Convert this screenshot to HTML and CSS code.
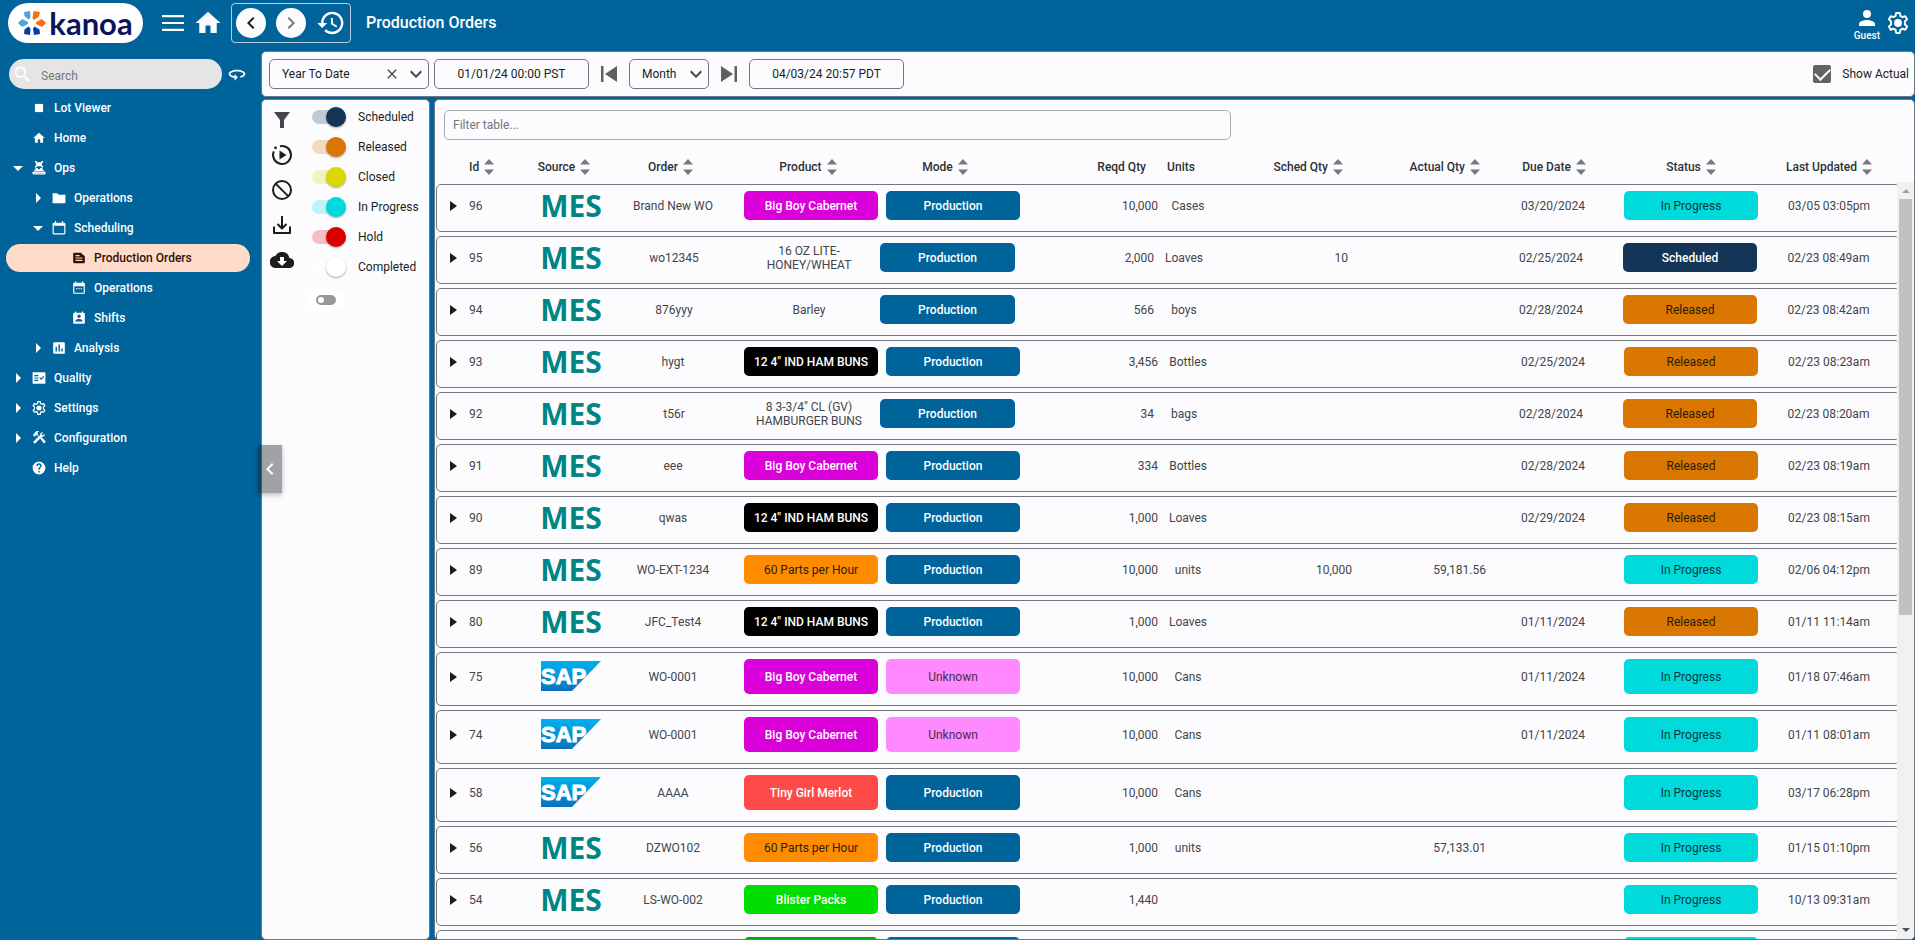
FILE: index.html
```html
<!DOCTYPE html>
<html lang="en">
<head>
<meta charset="utf-8">
<title>Production Orders</title>
<link rel="stylesheet" href="styles.css">
</head>
<body>
<svg class="defs" aria-hidden="true">
  <defs>
    <linearGradient id="sapfill" x1="0" y1="0" x2="0" y2="1"><stop offset="0" stop-color="#00b1ee"/><stop offset="1" stop-color="#0a72c0"/></linearGradient>
  </defs>
  <symbol id="i-home" viewBox="0 0 24 24"><path d="M10 20v-6h4v6h5v-8h3L12 3 2 12h3v8z"/></symbol>
  <symbol id="i-gear" viewBox="2 2 20 20"><path fill="none" stroke="currentColor" stroke-width="1.800" stroke-linejoin="round" d="M10.300 3h3.400l.5 2.600 1.900 1.100 2.500-.9 1.700 2.900-2 1.800v2.900l2 1.800-1.700 2.900-2.500-.9-1.900 1.100-.5 2.700h-3.400l-.5-2.700-1.900-1.100-2.500.9-1.700-2.900 2-1.800v-2.900l-2-1.800 1.700-2.900 2.500.9 1.900-1.100z"/><circle cx="12" cy="12" r="3.600"/></symbol>
  <symbol id="i-down" viewBox="0 0 24 24"><path d="M7.400 8.600 12 13.200l4.600-4.600L18 10l-6 6-6-6z"/></symbol>
  <symbol id="i-sort" viewBox="0 0 10 16"><path d="M0 5.500 5 0l5 5.500zM0 10.500h10L5 16z"/></symbol>
  <symbol id="i-caret" viewBox="0 0 7 10"><path d="M0 0 7 5 0 10z"/></symbol>
</svg>

<header class="topbar">
  <a class="logo" href="#" aria-label="kanoa">
    <svg viewBox="0 0 28 26" aria-hidden="true"><path fill="#4ba3e3" d="M6 2l6-1 .5 6.500-2 2L6.500 6z"/><path fill="#4ba3e3" d="M0 13l4-4 6 3v2l-6 3z"/><path fill="#ff6c0e" d="M15.500 1 22 2l-1 4.500-5 3.500-1.500-2z"/><path fill="#ff6c0e" d="M18 12l6-3 4 4-4 4-6-3z"/><path fill="#0b3aa5" d="M10.500 16.500l2 2L12 25l-6-1 .5-4.500z"/><path fill="#0b3aa5" d="M16.500 16.500l5 3L22 24l-6 1-1-6.500z"/></svg>
    <span>kanoa</span>
  </a>
  <button class="icon-btn" aria-label="Menu"><svg class="i-24" viewBox="0 0 24 24"><path d="M1 4h22v2.200H1zM1 10.900h22v2.200H1zM1 17.800h22V20H1z"/></svg></button>
  <button class="icon-btn home" aria-label="Home"><svg class="i-30" viewBox="0 0 24 24"><path d="M10 20v-6h4v6h5v-8h3L12 3 2 12h3v8z"/></svg></button>
  <div class="history">
    <button class="round" aria-label="Back"><svg class="i-24" viewBox="0 0 24 24"><path d="M15.400 7.400 14 6l-6 6 6 6 1.400-1.400L10.800 12z"/></svg></button>
    <button class="round muted" aria-label="Forward"><svg class="i-24" viewBox="0 0 24 24"><path d="M10 6 8.600 7.400l4.600 4.600-4.600 4.600L10 18l6-6z"/></svg></button>
    <button class="icon-btn" aria-label="History"><svg class="i-30" viewBox="0 0 24 24"><path d="M13 3a9 9 0 0 0-9 9H1l3.900 3.900.1.100L9 12H6a7 7 0 1 1 2.100 4.900l-1.500 1.500A9 9 0 1 0 13 3zm-1 5v5l4.300 2.500.7-1.200-3.500-2.100V8z"/></svg></button>
  </div>
  <h1>Production Orders</h1>
  <div class="user">
    <button class="guest"><svg class="i-24" viewBox="0 0 24 24"><path d="M12 12a4 4 0 1 0 0-8 4 4 0 0 0 0 8zm0 2c-2.700 0-8 1.300-8 4v2h16v-2c0-2.700-5.300-4-8-4z"/></svg><span>Guest</span></button>
    <button class="icon-btn" aria-label="Settings"><svg class="i-22"><use href="#i-gear"/></svg></button>
  </div>
</header>

<div class="shell">
  <nav class="sidebar" aria-label="Main">
    <div class="search-row">
      <div class="search">
        <svg viewBox="0 0 24 24" aria-hidden="true"><path d="M15.500 14h-.8l-.3-.3a6.500 6.500 0 1 0-.7.7l.3.3v.8l5 5 1.500-1.500zm-6 0a4.500 4.500 0 1 1 0-9 4.500 4.500 0 0 1 0 9z"/></svg>
        <input type="text" placeholder="Search" aria-label="Search">
      </div>
      <button class="icon-btn" aria-label="Reload"><svg class="i-20" viewBox="0 0 24 24"><path d="M12 7C6.500 7 2 9.200 2 12c0 2.200 2.900 4.100 7 4.800V20l4-4-4-4v2.700c-3.200-.6-5-1.900-5-2.700 0-1.100 3-3 8-3s8 1.900 8 3c0 .7-1.500 1.900-4 2.500v2.100c3.500-.8 6-2.500 6-4.600 0-2.800-4.500-5-10-5z"/></svg></button>
    </div>
    <ul class="tree">
      <li><a href="#"><i></i><svg viewBox="0 0 24 24"><path d="M5 5h14v14H5z"/></svg>Lot Viewer</a></li>
      <li><a href="#"><i></i><svg><use href="#i-home"/></svg>Home</a></li>
      <li><a href="#"><i class="open"></i><svg viewBox="0 0 24 24"><path d="M5 0h3v2h8V0h3v3h-2v5h2v3h-3V9H8v2H5V8h2V3H5zM6 12h4v2h4v-2h4v3h2v2H4v-2h2zM3 18h18a2.500 2.500 0 0 1 0 5H3a2.500 2.500 0 0 1 0-5zm1 2v1.500h2V20zm5 0v1.500h2V20zm4 0v1.500h2V20zm5 0v1.500h2V20z"/></svg>Ops</a>
        <ul>
          <li><a href="#"><i class="shut"></i><svg viewBox="0 0 24 24"><path d="M9 4H1v17h22V6.500H11.500z"/></svg>Operations</a></li>
          <li><a href="#"><i class="open"></i><svg viewBox="0 0 24 24"><path d="M21 3h-2V0h-2v3H7V0H5v3H3a2 2 0 0 0-2 2v16c0 1.100.9 2 2 2h18a2 2 0 0 0 2-2V5a2 2 0 0 0-2-2zm0 18H3V8h18z"/></svg>Scheduling</a>
            <ul>
              <li><a class="current" href="#" aria-current="page"><i></i><svg viewBox="0 0 24 24"><path d="M15 3H4a2 2 0 0 0-2 2v14c0 1.100.9 2 2 2h16a2 2 0 0 0 2-2V9zM6 7h7v2H6zm12 10H6v-2h12zm0-4H6v-2h12z"/></svg>Production Orders</a></li>
              <li><a href="#"><i></i><svg viewBox="0 0 24 24"><path d="M7 12h2v2H7zm4 0h2v2h-2zm4 0h2v2h-2zM20 3h-1V1h-2v2H7V1H5v2H4a2 2 0 0 0-2 2v15c0 1.100.9 2 2 2h16a2 2 0 0 0 2-2V5a2 2 0 0 0-2-2zm0 17H4V9h16z"/></svg>Operations</a></li>
              <li><a href="#"><i></i><svg viewBox="0 0 24 24"><path fill-rule="evenodd" d="M20 3h-1V1h-2v2H7V1H5v2H4a2 2 0 0 0-2 2v15c0 1.100.9 2 2 2h16a2 2 0 0 0 2-2V5a2 2 0 0 0-2-2zm-8 3a3 3 0 1 1 0 6 3 3 0 0 1 0-6zm6 12H6v-1c0-2 4-3.100 6-3.100s6 1.100 6 3.100z"/></svg>Shifts</a></li>
            </ul>
          </li>
          <li><a href="#"><i class="shut"></i><svg viewBox="0 0 24 24"><path fill-rule="evenodd" d="M4 2h16a2 2 0 0 1 2 2v16a2 2 0 0 1-2 2H4a2 2 0 0 1-2-2V4c0-1.100.9-2 2-2zm2 8v8h2.500v-8zm5-4v12h2.500V6zm5 7v5h2.500v-5z"/></svg>Analysis</a></li>
        </ul>
      </li>
      <li><a href="#"><i class="shut"></i><svg viewBox="0 0 24 24"><path fill-rule="evenodd" d="M2 2h20a1 1 0 0 1 1 1v18a1 1 0 0 1-1 1H2a1 1 0 0 1-1-1V3c0-.6.400-1 1-1zm2 5v2h7V7zm0 4v2h7v-2zm0 4v2h7v-2zm8.500-3 3 3.500L21 9.800 19.600 8.400l-4.100 4.200-1.600-1.900z"/></svg>Quality</a></li>
      <li><a href="#"><i class="shut"></i><svg><use href="#i-gear"/></svg>Settings</a></li>
      <li><a href="#"><i class="shut"></i><svg viewBox="1 1 22 22"><path d="m14 13 2.200-2.200 6.500 6.700-2.800 3.200zM17.500 10a3.500 3.500 0 0 0 3.300-4.700L18.100 8 16 5.900l2.700-2.700a3.500 3.500 0 0 0-4.700 4l-1.900 1.900-2.500-2.600 1-1L9.200 4.100l2.800-2.900c-1.200-1.200-3.100-1.200-4.200 0L4.200 4.800l1.400 1.400H2.800l-.7.700 3.500 3.500.7-.7V6.900l1.400 1.400 1-1 2.600 2.500L2.700 18.400l2.800 2.800L16.800 9.900c.2.100.5.100.7.100z"/></svg>Configuration</a></li>
      <li><a href="#"><i></i><svg viewBox="0 0 24 24"><path d="M12 1a11 11 0 1 0 0 22 11 11 0 0 0 0-22zm1.200 18.500h-2.400V17h2.400zm2.300-8.700-1 1c-.8.900-1.300 1.600-1.300 3.400h-2.400v-.6c0-1.300.5-2.400 1.300-3.300l1.400-1.400c.4-.4.600-1 .6-1.500a2.100 2.100 0 0 0-4.200 0H7.500a4.500 4.500 0 0 1 9 0c0 .9-.4 1.800-1 2.400z"/></svg>Help</a></li>
    </ul>
  </nav>

  <main class="main">
    <section class="toolbar panel" aria-label="Time range">
      <div class="select range">
        <select aria-label="Range"><option>Year To Date</option></select>
        <span class="marks"><svg class="i-18" viewBox="0 0 24 24"><path d="M19 6.400 17.600 5 12 10.600 6.400 5 5 6.400l5.600 5.600L5 17.600 6.400 19l5.600-5.600 5.600 5.600 1.400-1.400-5.600-5.600z"/></svg><svg class="i-24"><use href="#i-down"/></svg></span>
      </div>
      <input class="date" type="text" value="01/01/24 00:00 PST" aria-label="Start">
      <button class="step" aria-label="Previous"><svg viewBox="0 0 16 16"><path d="M0 0h2.500v16H0zM16 0v16L4 8z"/></svg></button>
      <div class="select unit">
        <select aria-label="Step"><option>Month</option></select>
        <span class="marks"><svg class="i-24"><use href="#i-down"/></svg></span>
      </div>
      <button class="step" aria-label="Next"><svg viewBox="0 0 16 16"><path d="M13.500 0H16v16h-2.500zM0 0v16l12-8z"/></svg></button>
      <input class="date" type="text" value="04/03/24 20:57 PDT" aria-label="End">
      <label class="check"><input type="checkbox" checked><span>Show Actual</span></label>
    </section>

    <div class="columns">
      <aside class="filters panel">
        <div class="tools">
          <button aria-label="Filter"><svg class="i-24 soft" viewBox="0 0 24 24"><path d="M4 4h16l-6 8v8h-4v-8z"/></svg></button>
          <button aria-label="Resume"><svg class="i-24" viewBox="0 0 24 24"><path d="M9.500 7.500v9l7-4.500z"/><path fill="none" stroke="currentColor" stroke-width="2" d="M10 3.200A9 9 0 1 1 3.800 8.300"/><circle cx="5.500" cy="4.800" r="1.400"/></svg></button>
          <button aria-label="Block"><svg class="i-24" viewBox="0 0 24 24"><path fill="none" stroke="currentColor" stroke-width="2" d="M5.600 5.600 18.400 18.400"/><circle fill="none" stroke="currentColor" stroke-width="2" cx="12" cy="12" r="9"/></svg></button>
          <button aria-label="Import"><svg class="i-24" viewBox="0 0 24 24"><path fill="none" stroke="currentColor" stroke-width="2" stroke-linejoin="round" d="M4 13.500V20h16v-6.500M12 3v12M7.500 11l4.500 4.500L16.500 11"/></svg></button>
          <button aria-label="Download"><svg class="i-24" viewBox="0 0 24 24"><path d="M19.400 10A7.500 7.500 0 0 0 5.400 8 6 6 0 0 0 6 20h13a5 5 0 0 0 .4-10zM17 13l-5 5-5-5h3V9h4v4z"/></svg></button>
        </div>
        <div class="switches">
          <label class="sw scheduled"><input type="checkbox" checked>Scheduled</label>
          <label class="sw released"><input type="checkbox" checked>Released</label>
          <label class="sw closed"><input type="checkbox" checked>Closed</label>
          <label class="sw progress"><input type="checkbox" checked>In Progress</label>
          <label class="sw hold"><input type="checkbox" checked>Hold</label>
          <label class="sw completed"><input type="checkbox" checked>Completed</label>
          <button class="all" aria-label="Toggle all"><svg viewBox="0 0 20 10"><path fill-rule="evenodd" d="M5 0h10a5 5 0 0 1 0 10H5A5 5 0 0 1 5 0zm0 2a3 3 0 1 0 0 6 3 3 0 0 0 0-6z"/></svg></button>
        </div>
      </aside>

      <section class="orders panel">
        <div class="filter-row"><input type="text" placeholder="Filter table..." aria-label="Filter table"></div>
        <div class="table-area">
          <table>
            <thead>
              <tr><th></th><th class="id">Id <svg><use href="#i-sort"/></svg></th><th>Source <svg><use href="#i-sort"/></svg></th><th>Order <svg><use href="#i-sort"/></svg></th><th>Product <svg><use href="#i-sort"/></svg></th><th>Mode <svg><use href="#i-sort"/></svg></th><th class="num">Reqd Qty</th><th>Units</th><th class="num">Sched Qty <svg><use href="#i-sort"/></svg></th><th class="num act">Actual Qty <svg><use href="#i-sort"/></svg></th><th>Due Date <svg><use href="#i-sort"/></svg></th><th>Status <svg><use href="#i-sort"/></svg></th><th>Last Updated <svg><use href="#i-sort"/></svg></th></tr>
            </thead>
            <tbody>
              <tr><td><button class="expand" aria-label="Expand"><svg><use href="#i-caret"/></svg></button></td><td class="id">96</td><td class="src"><b>MES</b></td><td>Brand New WO</td><td class="pill"><span class="magenta">Big Boy Cabernet</span></td><td class="pill"><span class="blue">Production</span></td><td class="num">10,000</td><td>Cases</td><td class="num"></td><td class="num"></td><td>03/20/2024</td><td class="pill"><span class="progress">In Progress</span></td><td>03/05 03:05pm</td></tr>
              <tr class="plain"><td><button class="expand" aria-label="Expand"><svg><use href="#i-caret"/></svg></button></td><td class="id">95</td><td class="src"><b>MES</b></td><td>wo12345</td><td>16 OZ LITE-<br>HONEY/WHEAT</td><td class="pill"><span class="blue">Production</span></td><td class="num">2,000</td><td>Loaves</td><td class="num">10</td><td class="num"></td><td>02/25/2024</td><td class="pill"><span class="navy">Scheduled</span></td><td>02/23 08:49am</td></tr>
              <tr class="plain"><td><button class="expand" aria-label="Expand"><svg><use href="#i-caret"/></svg></button></td><td class="id">94</td><td class="src"><b>MES</b></td><td>876yyy</td><td>Barley</td><td class="pill"><span class="blue">Production</span></td><td class="num">566</td><td>boys</td><td class="num"></td><td class="num"></td><td>02/28/2024</td><td class="pill"><span class="released">Released</span></td><td>02/23 08:42am</td></tr>
              <tr><td><button class="expand" aria-label="Expand"><svg><use href="#i-caret"/></svg></button></td><td class="id">93</td><td class="src"><b>MES</b></td><td>hygt</td><td class="pill"><span class="black">12 4" IND HAM BUNS</span></td><td class="pill"><span class="blue">Production</span></td><td class="num">3,456</td><td>Bottles</td><td class="num"></td><td class="num"></td><td>02/25/2024</td><td class="pill"><span class="released">Released</span></td><td>02/23 08:23am</td></tr>
              <tr class="plain"><td><button class="expand" aria-label="Expand"><svg><use href="#i-caret"/></svg></button></td><td class="id">92</td><td class="src"><b>MES</b></td><td>t56r</td><td>8 3-3/4" CL (GV)<br>HAMBURGER BUNS</td><td class="pill"><span class="blue">Production</span></td><td class="num">34</td><td>bags</td><td class="num"></td><td class="num"></td><td>02/28/2024</td><td class="pill"><span class="released">Released</span></td><td>02/23 08:20am</td></tr>
              <tr><td><button class="expand" aria-label="Expand"><svg><use href="#i-caret"/></svg></button></td><td class="id">91</td><td class="src"><b>MES</b></td><td>eee</td><td class="pill"><span class="magenta">Big Boy Cabernet</span></td><td class="pill"><span class="blue">Production</span></td><td class="num">334</td><td>Bottles</td><td class="num"></td><td class="num"></td><td>02/28/2024</td><td class="pill"><span class="released">Released</span></td><td>02/23 08:19am</td></tr>
              <tr><td><button class="expand" aria-label="Expand"><svg><use href="#i-caret"/></svg></button></td><td class="id">90</td><td class="src"><b>MES</b></td><td>qwas</td><td class="pill"><span class="black">12 4" IND HAM BUNS</span></td><td class="pill"><span class="blue">Production</span></td><td class="num">1,000</td><td>Loaves</td><td class="num"></td><td class="num"></td><td>02/29/2024</td><td class="pill"><span class="released">Released</span></td><td>02/23 08:15am</td></tr>
              <tr><td><button class="expand" aria-label="Expand"><svg><use href="#i-caret"/></svg></button></td><td class="id">89</td><td class="src"><b>MES</b></td><td>WO-EXT-1234</td><td class="pill"><span class="orange">60 Parts per Hour</span></td><td class="pill"><span class="blue">Production</span></td><td class="num">10,000</td><td>units</td><td class="num">10,000</td><td class="num">59,181.56</td><td></td><td class="pill"><span class="progress">In Progress</span></td><td>02/06 04:12pm</td></tr>
              <tr><td><button class="expand" aria-label="Expand"><svg><use href="#i-caret"/></svg></button></td><td class="id">80</td><td class="src"><b>MES</b></td><td>JFC_Test4</td><td class="pill"><span class="black">12 4" IND HAM BUNS</span></td><td class="pill"><span class="blue">Production</span></td><td class="num">1,000</td><td>Loaves</td><td class="num"></td><td class="num"></td><td>01/11/2024</td><td class="pill"><span class="released">Released</span></td><td>01/11 11:14am</td></tr>
              <tr><td><button class="expand" aria-label="Expand"><svg><use href="#i-caret"/></svg></button></td><td class="id">75</td><td class="src"><svg viewBox="0 0 60 30"><path fill="url(#sapfill)" d="M0 0h60L31 30H0z"/><text x="0" y="23">SAP</text></svg></td><td>WO-0001</td><td class="pill"><span class="magenta">Big Boy Cabernet</span></td><td class="pill"><span class="pink">Unknown</span></td><td class="num">10,000</td><td>Cans</td><td class="num"></td><td class="num"></td><td>01/11/2024</td><td class="pill"><span class="progress">In Progress</span></td><td>01/18 07:46am</td></tr>
              <tr><td><button class="expand" aria-label="Expand"><svg><use href="#i-caret"/></svg></button></td><td class="id">74</td><td class="src"><svg viewBox="0 0 60 30"><path fill="url(#sapfill)" d="M0 0h60L31 30H0z"/><text x="0" y="23">SAP</text></svg></td><td>WO-0001</td><td class="pill"><span class="magenta">Big Boy Cabernet</span></td><td class="pill"><span class="pink">Unknown</span></td><td class="num">10,000</td><td>Cans</td><td class="num"></td><td class="num"></td><td>01/11/2024</td><td class="pill"><span class="progress">In Progress</span></td><td>01/11 08:01am</td></tr>
              <tr><td><button class="expand" aria-label="Expand"><svg><use href="#i-caret"/></svg></button></td><td class="id">58</td><td class="src"><svg viewBox="0 0 60 30"><path fill="url(#sapfill)" d="M0 0h60L31 30H0z"/><text x="0" y="23">SAP</text></svg></td><td>AAAA</td><td class="pill"><span class="red">Tiny Girl Merlot</span></td><td class="pill"><span class="blue">Production</span></td><td class="num">10,000</td><td>Cans</td><td class="num"></td><td class="num"></td><td></td><td class="pill"><span class="progress">In Progress</span></td><td>03/17 06:28pm</td></tr>
              <tr><td><button class="expand" aria-label="Expand"><svg><use href="#i-caret"/></svg></button></td><td class="id">56</td><td class="src"><b>MES</b></td><td>DZWO102</td><td class="pill"><span class="orange">60 Parts per Hour</span></td><td class="pill"><span class="blue">Production</span></td><td class="num">1,000</td><td>units</td><td class="num"></td><td class="num">57,133.01</td><td></td><td class="pill"><span class="progress">In Progress</span></td><td>01/15 01:10pm</td></tr>
              <tr><td><button class="expand" aria-label="Expand"><svg><use href="#i-caret"/></svg></button></td><td class="id">54</td><td class="src"><b>MES</b></td><td>LS-WO-002</td><td class="pill"><span class="green">Blister Packs</span></td><td class="pill"><span class="blue">Production</span></td><td class="num">1,440</td><td></td><td class="num"></td><td class="num"></td><td></td><td class="pill"><span class="progress">In Progress</span></td><td>10/13 09:31am</td></tr>
              <tr><td></td><td class="id"></td><td class="src"></td><td></td><td class="pill"><span class="darkgreen"></span></td><td class="pill"><span class="blue"></span></td><td></td><td></td><td></td><td></td><td></td><td class="pill"><span class="progress"></span></td><td></td></tr>
            </tbody>
          </table>
          <div class="scrollbar" aria-hidden="true"><svg viewBox="0 0 8 4"><path d="M0 4 4 0l4 4z"/></svg><span class="thumb"></span><svg class="end" viewBox="0 0 8 4"><path d="M0 0h8L4 4z"/></svg></div>
        </div>
      </section>
    </div>
    <button class="collapse" aria-label="Collapse sidebar"><svg class="i-24" viewBox="0 0 24 24"><path d="M15.400 7.400 14 6l-6 6 6 6 1.400-1.400L10.800 12z"/></svg></button>
  </main>
</div>
</body>
</html>
```

FILE: styles.css
```css
* { box-sizing: border-box; }
html, body { height: 100%; }
body {
  margin: 0;
  display: flex;
  flex-direction: column;
  overflow: hidden;
  background: #00639a;
  color: #1a1c1e;
  font: 400 12px/14px Roboto, "Liberation Sans", sans-serif;
}
button, input, select { font: inherit; color: inherit; }
button { margin: 0; padding: 0; border: 0; background: none; }
svg { display: block; fill: currentColor; flex: none; }
.defs { position: absolute; width: 0; height: 0; }
.i-18 { width: 16px; height: 16px; }
.i-20 { width: 20px; height: 20px; }
.i-22 { width: 22px; height: 22px; }
.i-24 { width: 24px; height: 24px; }
.i-30 { width: 30px; height: 30px; }
.icon-btn { display: flex; align-items: center; color: #fcfcff; }
.panel { background: #fcfcff; border: 1px solid #72777f; border-radius: 5px; }

/* header */
.topbar { display: flex; align-items: center; height: 51px; padding: 3px 6px 8px 8px; color: #fff; }
.logo {
  display: flex; align-items: center; justify-content: center; gap: 3px;
  width: 135px; height: 40px; margin-right: 18px;
  border-radius: 20px; background: #fff; color: #0a145c; text-decoration: none;
}
.logo svg { width: 28px; height: 26px; }
.logo span { font: 700 31px/36px Lato, sans-serif; }
.topbar .home { margin: 0 8px; }
.history {
  display: flex; align-items: center; gap: 10px;
  width: 120px; height: 40px; padding-left: 4px;
  border: 1px solid #b4cde0; border-radius: 4px;
}
.round {
  display: grid; place-items: center; width: 30px; height: 30px;
  border-radius: 50%; background: #fcfcff; color: #1a1c1e;
}
.round.muted { color: #77797c; }
.topbar h1 { margin: 0 auto 0 15px; font: 500 16px/20px Roboto, sans-serif; }
.user { display: flex; align-items: center; gap: 7px; }
.guest { display: flex; flex-direction: column; align-items: center; padding-top: 2px; color: #fff; font: 500 10px/12px Roboto, sans-serif; }

/* sidebar */
.shell { flex: 1; min-height: 0; display: flex; }
.sidebar { flex: none; width: 261px; color: #fff; }
.search-row { display: flex; align-items: center; gap: 5px; padding: 8px 14px 4px 9px; }
.search {
  flex: 1; display: flex; align-items: center; height: 30px; padding-left: 3px;
  border-radius: 15px; background: #e5e5e5; color: #fff;
}
.search svg { width: 21px; height: 21px; }
.search input { min-width: 0; width: 100%; padding: 3px 8px 0; border: 0; outline: 0; background: none; color: #1a1c1e; }
.search input::placeholder { color: #75777a; opacity: 1; }
.tree, .tree ul { margin: 0; padding: 0; list-style: none; }
.tree a {
  display: flex; align-items: center; height: 28px; margin: 1px 11px 2px 6px; padding-left: 6px;
  border-radius: 14px; color: #fff; font-weight: 500; text-decoration: none;
}
.tree ul a { padding-left: 26px; }
.tree ul ul a { padding-left: 46px; }
.tree svg { width: 14px; height: 14px; margin-right: 8px; }
.tree i { flex: none; width: 20px; display: flex; }
.tree i::before { content: ""; border: 0 solid transparent; }
.tree i.open::before { margin-left: 1px; border-width: 5px 5px 0; border-top-color: #fff; }
.tree i.shut::before { margin-left: 4px; border-width: 5px 0 5px 5px; border-left-color: #fff; }
.tree a.current { background: #ffdbcc; color: #351000; }

/* main */
.main { position: relative; flex: 1; min-width: 0; display: flex; flex-direction: column; gap: 2px; }
.toolbar { display: flex; align-items: center; height: 46px; padding: 0 5px 0 7px; }
.select { position: relative; height: 30px; }
.select select {
  width: 100%; height: 30px; padding: 0 12px; appearance: none;
  border: 1px solid #72777f; border-radius: 5px; background: none;
}
.range { width: 160px; margin-right: 5px; }
.unit { width: 80px; }
.marks {
  position: absolute; inset: 0 1px 0 auto; display: flex; align-items: center; gap: 4px;
  color: #44474a; pointer-events: none;
}
.date { width: 155px; height: 30px; padding: 0; text-align: center; border: 1px solid #72777f; border-radius: 5px; background: none; }
.step { display: grid; place-items: center; width: 40px; height: 30px; color: #5f6062; }
.step svg { width: 16px; height: 16px; }
.check { display: flex; align-items: center; gap: 11px; margin-left: auto; }
.check input {
  appearance: none; display: grid; place-items: center; width: 18px; height: 18px; margin: 0;
  border-radius: 2px; background: #626365;
}
.check input::before {
  content: ""; width: 13px; height: 7px; margin-bottom: 4px;
  border: solid #fff; border-width: 0 0 2px 2px; rotate: -45deg;
}
.columns { flex: 1; min-height: 0; display: flex; gap: 4px; }

.filters { flex: none; width: 169px; display: flex; padding: 2px 0 0 5px; }
.tools { width: 30px; display: flex; flex-direction: column; padding-top: 6px; gap: 11px; }
.tools button { display: grid; place-items: center; height: 24px; }
.soft { color: #44464a; }
.switches { padding-left: 15px; }
.sw { display: flex; align-items: center; height: 30px; gap: 12px; color: #1a1c1e; }
.sw input {
  appearance: none; display: flex; align-items: center; justify-content: flex-end;
  width: 34px; height: 14px; margin: 0; border-radius: 7px; background: var(--track);
}
.sw input::before {
  content: ""; width: 20px; height: 20px; border-radius: 50%; background: var(--knob);
  box-shadow: 0 1px 2px rgba(0, 0, 0, .35);
}
.sw.scheduled { --knob: #143556; --track: #c1c9d6; }
.sw.released { --knob: #d97700; --track: #f3dabf; }
.sw.closed { --knob: #d9d900; --track: #f3f3bf; }
.sw.progress { --knob: #00dada; --track: #bff4f7; }
.sw.hold { --knob: #d90000; --track: #f3bfc2; }
.sw.completed { --knob: #fff; --track: #fdfdff; }
.all {
  display: grid; place-items: center; width: 38px; height: 24px; margin: 6px 0 0 -5px;
  border-radius: 12px; background: #fff; color: #97989a;
}
.all svg { width: 20px; height: 10px; }

/* table */
.orders { flex: 1; min-width: 0; display: flex; flex-direction: column; padding: 10px 0 0 1px; overflow: hidden; }
.filter-row { display: grid; grid-template-columns: 7fr 6fr; padding: 0 8px; }
.filter-row input {
  height: 30px; padding: 0 8px; border: 1px solid #aaacb0; border-radius: 5px; background: none;
}
.filter-row input::placeholder { color: #75777a; opacity: 1; }
.table-area { flex: 1; min-height: 0; display: grid; grid-template-columns: 1fr 17px; padding-top: 10px; }
table { min-width: 0; min-height: 0; display: flex; flex-direction: column; overflow: hidden; }
thead { display: block; }
tbody { display: flex; flex-direction: column; gap: 4px; margin-right: -3px; }
tr { display: grid; }
thead tr {
  height: 34px; padding: 0 1px;
  grid-template-columns: 32px 55fr 80fr 133fr 142fr 132fr 135fr 70fr 127fr 145fr 132fr 142fr 134fr;
}
tbody tr {
  padding: 6px 3px 11px 0; border: 1px solid #72777f; border-radius: 5px;
  grid-template-columns: 32px 67fr 70fr 134fr 142fr 142fr 134fr 60fr 134fr 134fr 134fr 142fr 134fr;
}
tbody tr.plain { grid-template-columns: 32px 67fr 70fr 136fr 134fr 143fr 135fr 60fr 134fr 135fr 136fr 142fr 135fr; }
th, td {
  display: flex; align-items: center; justify-content: center; min-width: 0; min-height: 29px;
  padding: 0; text-align: center; white-space: nowrap;
}
th { font-weight: 500; gap: 5px; color: #2e3033; }
th svg { width: 10px; height: 16px; color: #77797c; }
td { color: #434548; }
.id { justify-content: flex-start; }
.num { justify-content: flex-end; }
.num.act { padding-right: 8px; }
.expand { display: flex; color: #1a1c1e; }
.expand svg { width: 7px; height: 10px; }
.src b { color: #008484; font: 700 30px/24px "Open Sans", sans-serif; }
.src svg { width: 60px; height: 30px; margin: 2px 0 3px; }
.src text { font: 700 22px "Liberation Sans", sans-serif; fill: #fff; stroke: #fff; stroke-width: 1px; }
td.pill { align-items: stretch; padding: 0 4px; }
.pill span { flex: 1; display: grid; place-items: center; border-radius: 5px; color: #fff; font-weight: 500; }
.pill .magenta { background: #da00da; }
.pill .blue { background: #00639a; }
.pill .black { background: #000; }
.pill .navy { background: #143556; }
.pill .red { background: #ff4a4a; }
.pill .green { background: #00dd00; }
.pill .darkgreen { background: #00a800; }
.pill .orange { background: #ff8c00; color: #2b2013; font-weight: 400; }
.pill .pink { background: #ff8aff; color: #4a2c4d; font-weight: 400; }
.pill .released { background: #d97700; color: #2b1c08; font-weight: 400; }
.pill .progress { background: #00dada; color: #06393c; font-weight: 400; }

.scrollbar { display: flex; flex-direction: column; align-items: center; margin-top: 32px; padding: 7px 2px; background: #f1f1f1; color: #a3a3a3; }
.scrollbar svg { width: 8px; height: 4px; }
.thumb { width: 100%; height: 56%; margin-top: 6px; background: #c1c1c1; }
.scrollbar .end { margin-top: auto; color: #505050; }

.collapse {
  position: absolute; left: -3px; top: 394px; display: grid; place-items: center;
  width: 24px; height: 48px; background: rgba(26, 28, 30, .4); color: #fff;
  box-shadow: 0 2px 5px rgba(0, 0, 0, .25);
}
```
